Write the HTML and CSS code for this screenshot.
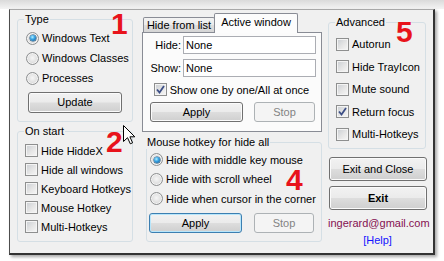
FILE: index.html
```html
<!DOCTYPE html>
<html>
<head>
<meta charset="utf-8">
<link rel="stylesheet" href="styles.css">
</head>
<body>
<div class="window">
  <div class="col col-left">
    <fieldset class="group g-type">
      <legend>Type</legend>
      <div class="opt row20"><span class="radio on"></span>Windows Text</div>
      <div class="opt row20"><span class="radio"></span>Windows Classes</div>
      <div class="opt row20"><span class="radio"></span>Processes</div>
      <button class="btn btn-update">Update</button>
    </fieldset>
    <fieldset class="group g-start">
      <legend>On start</legend>
      <div class="opt row19"><span class="check"></span>Hide HiddeX</div>
      <div class="opt row19"><span class="check"></span>Hide all windows</div>
      <div class="opt row19"><span class="check"></span>Keyboard Hotkeys</div>
      <div class="opt row19"><span class="check"></span>Mouse Hotkey</div>
      <div class="opt row19"><span class="check"></span>Multi-Hotkeys</div>
    </fieldset>
  </div>

  <div class="col col-mid">
    <div class="tabs">
      <div class="tab tab-first">Hide from list</div>
      <div class="tab tab-active">Active window</div>
    </div>
    <div class="panel">
      <div class="fields">
        <span class="flabel">Hide:</span><div class="input">None</div>
        <span class="flabel">Show:</span><div class="input">None</div>
      </div>
      <div class="opt check-row"><span class="check on"><svg viewBox="0 0 13 13" width="13" height="13"><path d="M3 6.5 L5.5 9.5 L10 3" fill="none" stroke="#3d4f86" stroke-width="1.8"/></svg></span>Show one by one/All at once</div>
      <div class="btn-row panel-btns">
        <button class="btn btn-apply">Apply</button>
        <button class="btn btn-stop disabled">Stop</button>
      </div>
    </div>
    <fieldset class="group g-mouse">
      <legend>Mouse hotkey for hide all</legend>
      <div class="opt row195"><span class="radio on"></span>Hide with middle key mouse</div>
      <div class="opt row195"><span class="radio"></span>Hide with scroll wheel</div>
      <div class="opt row195"><span class="radio"></span>Hide when cursor in the corner</div>
      <div class="btn-row mouse-btns">
        <button class="btn btn-apply default">Apply</button>
        <button class="btn btn-stop disabled">Stop</button>
      </div>
    </fieldset>
  </div>

  <div class="col col-right">
    <fieldset class="group g-adv">
      <legend>Advanced</legend>
      <div class="opt row225"><span class="check"></span>Autorun</div>
      <div class="opt row225"><span class="check"></span>Hide TrayIcon</div>
      <div class="opt row225"><span class="check"></span>Mute sound</div>
      <div class="opt row225"><span class="check on"><svg viewBox="0 0 13 13" width="13" height="13"><path d="M3 6.5 L5.5 9.5 L10 3" fill="none" stroke="#3d4f86" stroke-width="1.8"/></svg></span>Return focus</div>
      <div class="opt row225"><span class="check"></span>Multi-Hotkeys</div>
    </fieldset>
    <button class="btn btn-wide btn-close">Exit and Close</button>
    <button class="btn btn-wide btn-exit">Exit</button>
    <div class="email">ingerard@gmail.com</div>
    <div class="help">[Help]</div>
  </div>

  <span class="num n1">1</span>
  <span class="num n2">2</span>
  <span class="num n3">3</span>
  <span class="num n4">4</span>
  <span class="num n5">5</span>
  <svg class="cursor" width="13" height="20" viewBox="0 0 13 20"><path d="M0.5 0.5 L0.5 16.5 L4.5 12.7 L7.3 18.8 L9.6 17.8 L6.9 11.8 L11.8 11.8 Z" fill="#fff" stroke="#000" stroke-width="1" stroke-linejoin="miter"/></svg>
</div>
</body>
</html>
```
FILE: styles.css
```css
* { box-sizing: border-box; }
html, body { margin: 0; padding: 0; }
body {
  width: 444px;
  height: 261px;
  overflow: hidden;
  background: #fff linear-gradient(to bottom, #dadada 0, #f4f4f4 9px, #fff 9px) no-repeat;
  font-family: "Liberation Sans", Arial, sans-serif;
  font-size: 11px;
  color: #000;
  padding: 9px 0 0 9px;
}
.window {
  position: relative;
  width: 426px;
  height: 246px;
  background: #f0f0f0;
  border-top: 1px solid #a8a8a8;
  border-left: 1px solid #4d4d4d;
  border-right: 2px solid #333;
  border-bottom: 2px solid #333;
  box-shadow: 2px 2px 3px rgba(0,0,0,0.35);
  padding: 3px 6px 0 7px;
  display: flex;
  align-items: flex-start;
}
.col { display: flex; flex-direction: column; }
.col-left { width: 116px; }
.col-mid { width: 180px; margin-left: 9px; }
.col-right { width: 99px; margin-left: 6px; align-items: stretch; }

.group {
  margin: 0;
  border: 1px solid #d5dfe5;
  border-radius: 3px;
  min-width: 0;
}
.group legend {
  padding: 0 1px;
  line-height: 13px;
  height: 13px;
}
.g-type { padding: 2px 8px 8px 8px; }
.g-type legend { margin-left: -2px; }
.g-start { margin-top: 3px; padding: 3px 6px 5px 7px; }
.g-start legend { margin-left: -1px; }
.g-mouse { margin: 4px 0 0 4px; padding: 1px 4px 8px 3px; }
.g-mouse legend { margin-left: -4px; }
.g-adv { margin: 3px 1px 0 0; padding: 4px 4px 2px 7px; }
.g-adv legend { margin-left: -1px; }

.opt { display: flex; align-items: center; white-space: nowrap; }
.row20 { height: 20px; }
.row19 { height: 19px; }
.row195 { height: 19.5px; }
.row225 { height: 22.5px; }

.radio {
  position: relative;
  flex: none;
  width: 13px;
  height: 13px;
  margin-right: 3px;
  border-radius: 50%;
  border: 1px solid #8d8f90;
  background: radial-gradient(circle at 50% 45%, #f6f6f6 0, #e4e4e4 45%, #c9c9c9 100%);
  box-shadow: inset 0 0 0 1px #f4f4f4;
}
.radio.on::after {
  content: "";
  position: absolute;
  left: 2.5px;
  top: 2.5px;
  width: 6px;
  height: 6px;
  border-radius: 50%;
  background: radial-gradient(circle at 40% 35%, #b6f2ff 0, #3aa6e6 40%, #0c4d86 100%);
  box-shadow: 0 0 0 0.5px #134a75;
}
.check {
  flex: none;
  width: 13px;
  height: 13px;
  margin-right: 3px;
  border: 1px solid #8e8f8f;
  background: linear-gradient(135deg, #c9cdd2 0, #e6e6e6 55%, #f7f7f7 100%);
  box-shadow: inset 0 0 0 1px #f4f4f4;
  position: relative;
}
.check svg { position: absolute; left: -1px; top: -1px; display: block; }

.btn {
  font-family: inherit;
  font-size: 11px;
  color: #000;
  border: 1px solid #707070;
  border-radius: 3px;
  background: linear-gradient(to bottom, #f2f2f2 0, #ebebeb 48%, #dddddd 52%, #cfcfcf 100%);
  box-shadow: inset 0 0 0 1px #fbfbfb;
  padding: 0;
  margin: 0;
  line-height: 1;
}
.btn.default {
  border-color: #3c7fb1;
  box-shadow: inset 0 0 0 1px #b8e6fb;
}
.btn.disabled {
  border-color: #adb2b5;
  background: #f4f4f4;
  color: #838383;
  box-shadow: none;
}
.btn-update { margin: 4px 0 0 2px; width: 94px; height: 21px; }

.tabs {
  display: flex;
  align-items: flex-end;
  height: 20px;
  margin-top: 0;
  padding-left: 1px;
  margin-bottom: -1px;
  position: relative;
  z-index: 2;
}
.tab {
  border: 1px solid #898c95;
  border-bottom: none;
  border-radius: 2px 2px 0 0;
  text-align: center;
  white-space: nowrap;
}
.tab-first {
  width: 72px;
  height: 15px;
  margin-bottom: 1px;
  line-height: 14px;
  background: linear-gradient(to bottom, #f3f3f3 0, #ebebeb 50%, #dedede 51%, #d6d6d6 100%);
}
.tab-active {
  width: 84px;
  height: 20px;
  margin-left: -1px;
  line-height: 17px;
  background: #fcfcfc;
}
.panel {
  position: relative;
  z-index: 1;
  height: 100px;
  border: 1px solid #898c95;
  background: #fbfbfb;
  padding: 3px 5px 0 4px;
}
.fields {
  display: grid;
  grid-template-columns: 34px 1fr;
  grid-auto-rows: 18px;
  column-gap: 2px;
  row-gap: 5px;
  align-items: center;
}
.flabel { text-align: right; }
.input {
  height: 18px;
  border: 1px solid #abadb3;
  background: #fff;
  line-height: 16px;
  padding-left: 2px;
}
.check-row { justify-content: center; height: 19px; margin-top: 3px; }
.btn-row { display: flex; }
.panel-btns { margin-top: 3px; padding-left: 3px; }
.panel-btns .btn-apply { width: 93px; height: 20px; }
.panel-btns .btn-stop { width: 61px; height: 20px; margin-left: 11px; }
.mouse-btns { margin-top: 4.5px; padding-left: 0; }
.mouse-btns .btn-apply { width: 93px; height: 20px; margin-left: -1px; }
.mouse-btns .btn-stop { width: 60px; height: 20px; margin-left: 12px; }

.btn-wide { width: 98px; margin-left: 1px; height: 24px; }
.btn-close { margin-top: 8.5px; }
.btn-exit { margin-top: 5px; font-weight: bold; }
.email {
  margin-top: 5.5px;
  line-height: 15px;
  text-align: center;
  color: #851150;
}
.help {
  margin-top: 2px;
  line-height: 15px;
  text-align: center;
  color: #1414ff;
}

.num {
  position: absolute;
  font-family: "Liberation Sans", Arial, sans-serif;
  font-weight: bold;
  font-size: 30px;
  line-height: 21px;
  height: 21px;
  color: #e8131b;
}
.n1 { left: 101px; top: 3px; }
.n2 { left: 96px; top: 121px; }
.n3 { left: 279px; top: 28px; }
.n4 { left: 276px; top: 159px; }
.n5 { left: 386px; top: 11px; }
.cursor { position: absolute; left: 113px; top: 115px; }
```
